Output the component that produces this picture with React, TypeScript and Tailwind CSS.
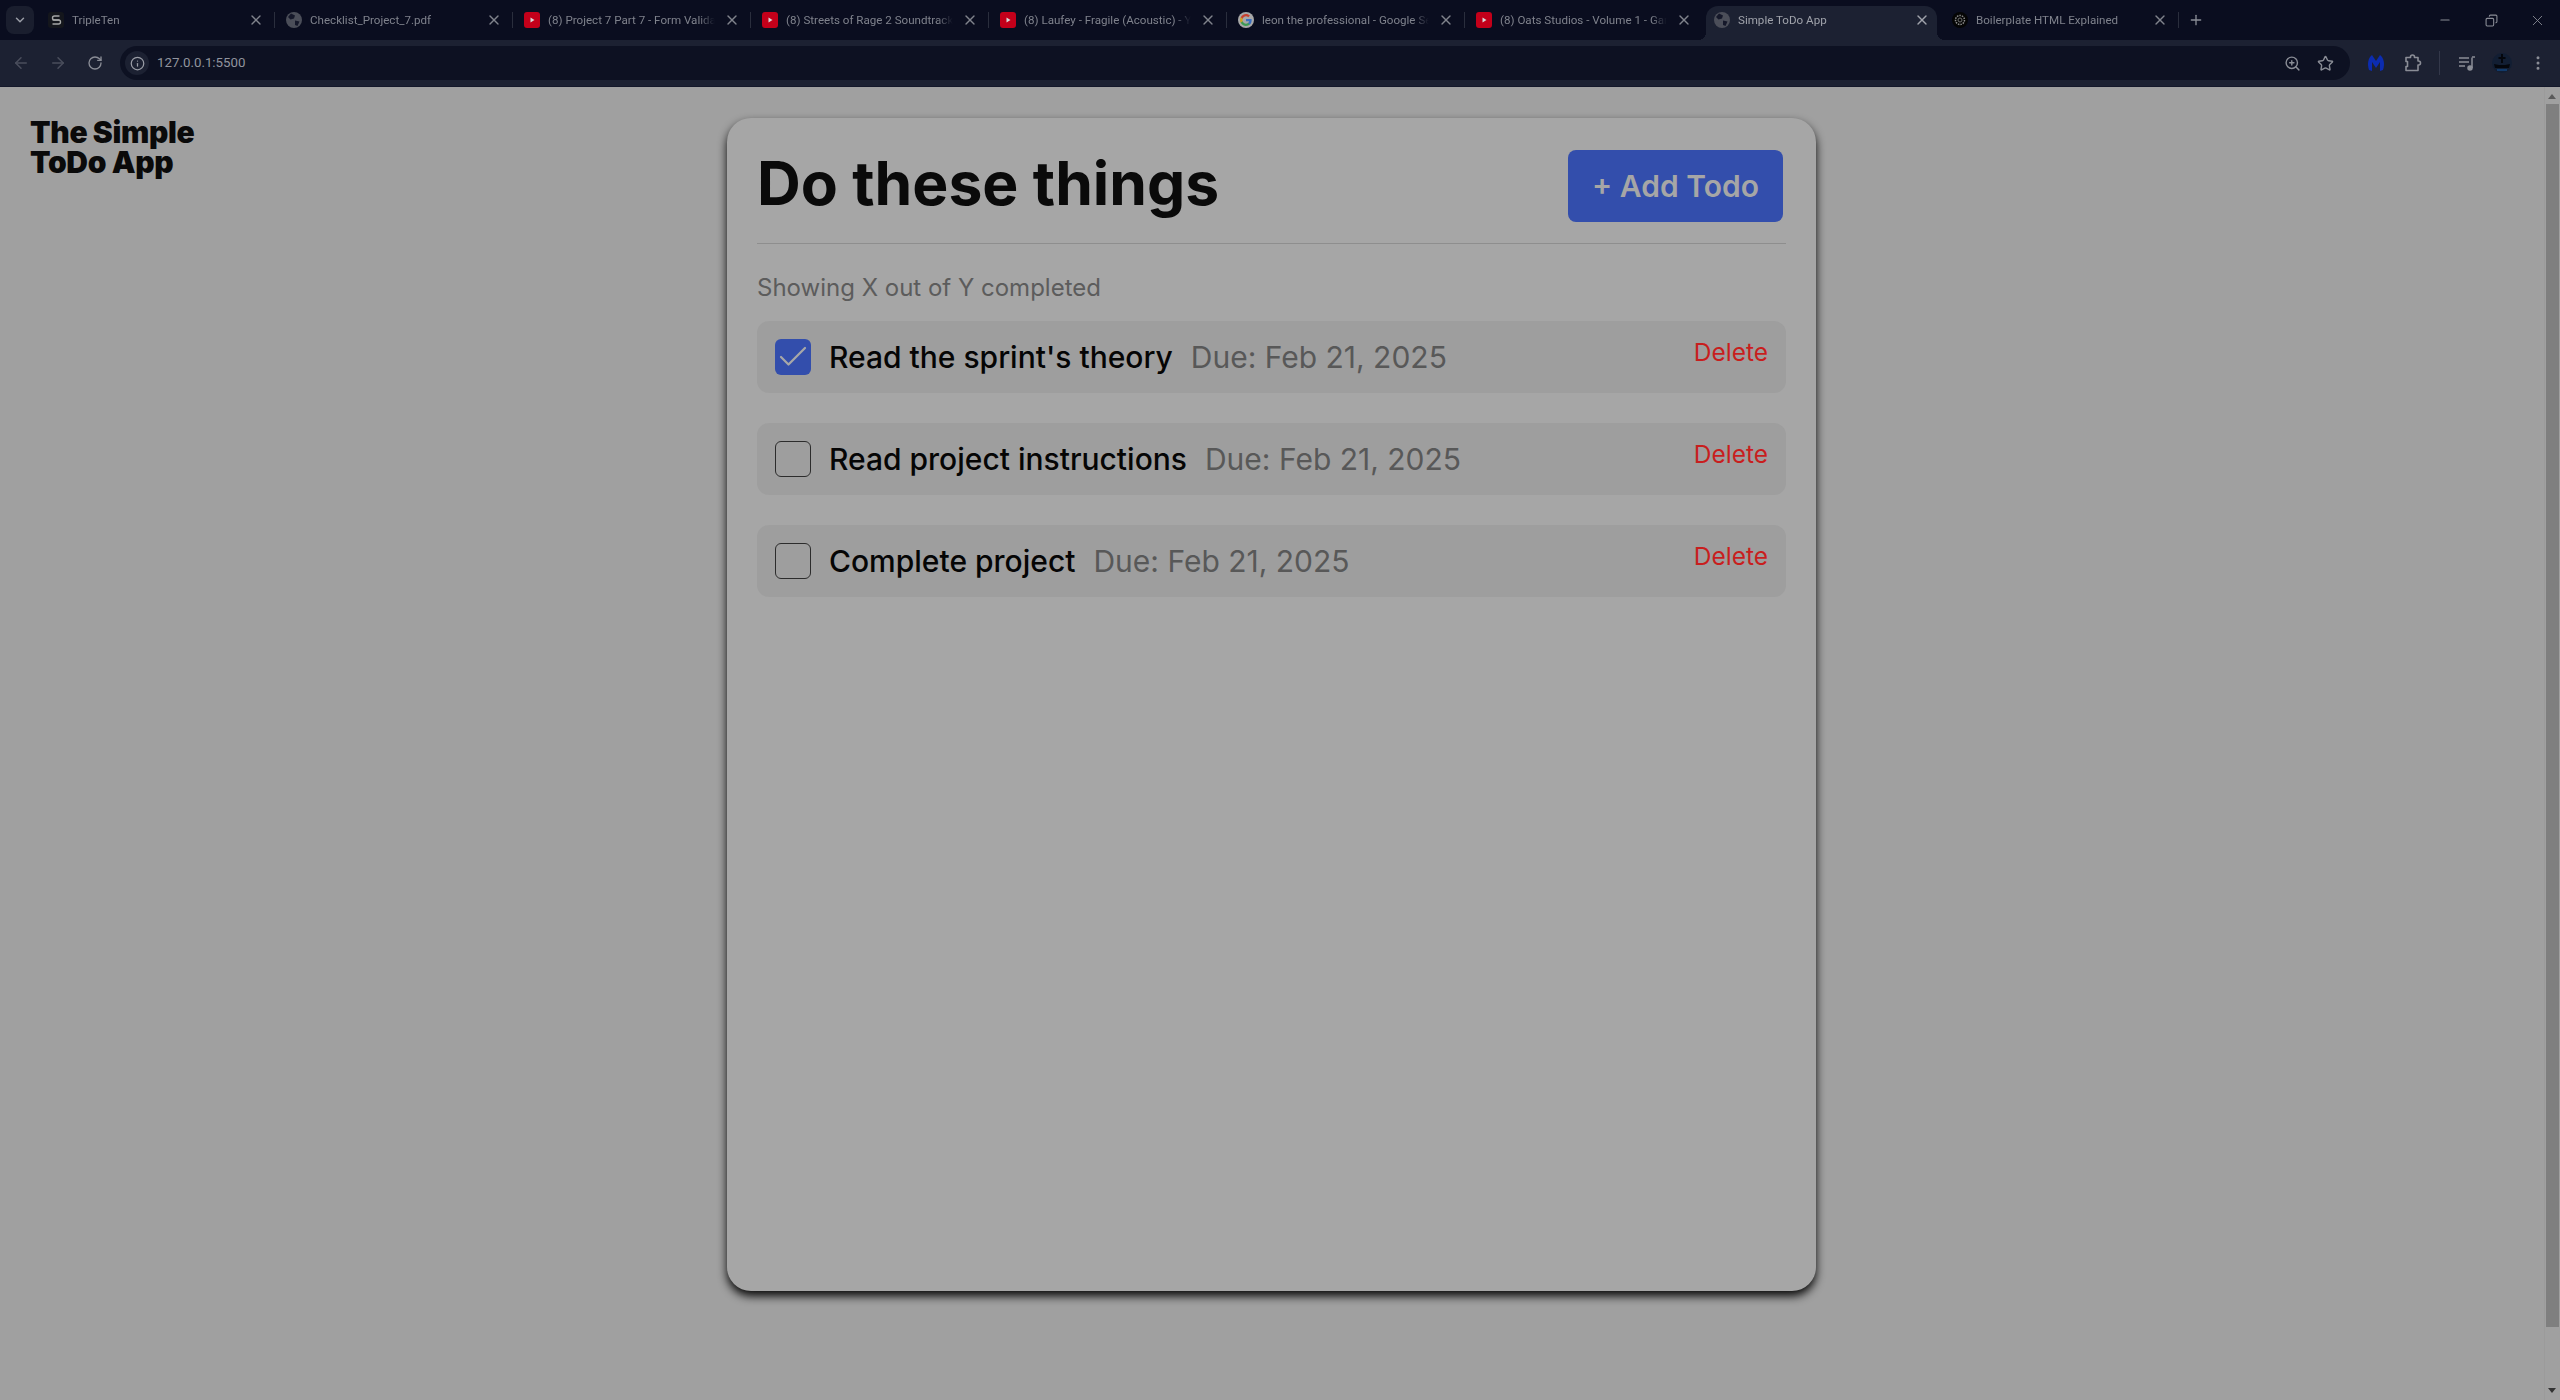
import { ArrowLeft, ArrowRight, Check, ChevronDown, Copy, Info, Minus, MoreVertical, Plus, RotateCw, Star, X, ZoomIn } from 'lucide-react'

type Favicon = 'tripleten' | 'globe' | 'youtube' | 'google' | 'openai'

const tabs: { title: string; icon: Favicon; active?: boolean }[] = [
  { title: 'TripleTen', icon: 'tripleten' },
  { title: 'Checklist_Project_7.pdf', icon: 'globe' },
  { title: '(8) Project 7 Part 7 - Form Validation', icon: 'youtube' },
  { title: '(8) Streets of Rage 2 Soundtrack', icon: 'youtube' },
  { title: '(8) Laufey - Fragile (Acoustic) - YouTube', icon: 'youtube' },
  { title: 'leon the professional - Google Search', icon: 'google' },
  { title: '(8) Oats Studios - Volume 1 - Garage', icon: 'youtube' },
  { title: 'Simple ToDo App', icon: 'globe', active: true },
  { title: 'Boilerplate HTML Explained', icon: 'openai' },
]

const todos = [
  { title: "Read the sprint's theory", due: 'Due: Feb 21, 2025', done: true },
  { title: 'Read project instructions', due: 'Due: Feb 21, 2025', done: false },
  { title: 'Complete project', due: 'Due: Feb 21, 2025', done: false },
]

function TabIcon({ icon }: { icon: Favicon }) {
  if (icon === 'youtube') {
    return (
      <svg width="16" height="16" viewBox="0 0 16 16" className="shrink-0">
        <rect x="0" y="0" width="16" height="16" rx="3" fill="#c4001a" />
        <path d="M6.500 5.500v5l4-2.500z" fill="#d8d8d8" />
      </svg>
    )
  }
  if (icon === 'google') {
    return (
      <svg width="16" height="16" viewBox="0 0 48 48" className="shrink-0">
        <circle cx="24" cy="24" r="24" fill="#a8a8a8" />
        <path d="M41 24.500c0-1.300-.1-2.500-.3-3.500H24v6.800h9.600c-.4 2.200-1.700 4.100-3.500 5.300v4.400h5.700C39 34.400 41 29.900 41 24.500z" fill="#3a6fc0" />
        <path d="M24 42c4.700 0 8.700-1.600 11.700-4.300L30 33.300c-1.600 1.100-3.600 1.700-6 1.700-4.600 0-8.500-3.100-9.900-7.300H8.200v4.500C11.100 38 17.100 42 24 42z" fill="#3d9a52" />
        <path d="M14.100 27.700c-.4-1.100-.6-2.300-.6-3.700s.2-2.500.6-3.700v-4.500H8.200C7.100 18.200 6 21 6 24s1.100 5.800 2.200 8.200z" fill="#d0a020" />
        <path d="M24 13c2.600 0 4.900.9 6.800 2.700l5-5C32.700 7.800 28.700 6 24 6 17.100 6 11.100 10 8.200 15.800l5.900 4.500C15.500 16.100 19.400 13 24 13z" fill="#c7402f" />
      </svg>
    )
  }
  if (icon === 'openai') {
    return (
      <svg width="16" height="16" viewBox="0 0 16 16" fill="none" className="shrink-0">
        <circle cx="8" cy="8" r="8" fill="#050505" />
        <circle cx="8" cy="8" r="4.500" stroke="#8b8b8b" strokeWidth="1.500" strokeDasharray="1.500 1" />
        <circle cx="8" cy="8" r="2" stroke="#6f6f6f" strokeWidth="1" />
      </svg>
    )
  }
  if (icon === 'tripleten') {
    return (
      <svg width="16" height="16" viewBox="0 0 16 16" fill="none" className="shrink-0">
        <rect width="16" height="16" rx="3" fill="#14161c" />
        <path d="M11.500 4H6.500a2 2 0 0 0 0 4h4a2 2 0 0 1 0 4h-6" stroke="#a5a6a6" strokeWidth="1.400" />
        <path d="M4.500 8h7" stroke="#a5a6a6" strokeWidth="1.400" />
      </svg>
    )
  }
  return (
    <svg width="16" height="16" viewBox="0 0 16 16" className="shrink-0">
      <circle cx="8" cy="8" r="8" fill="#4b4e59" />
      <path d="M5 1.500l4 2-1 3-3.500 1L2 5zM9 8.500l4.500 1-2 4.500-2.500-1z" fill="#15182a" />
    </svg>
  )
}

function BrowserTab({ title, icon, active }: { title: string; icon: Favicon; active?: boolean }) {
  return (
    <div className="relative flex h-[34px] w-[238px] shrink-0">
      <div className={`relative flex flex-1 items-center pb-[6px] ${active ? 'ml-[3px] mr-[4px] pl-[8px] rounded-t-[12px] bg-[#1c2132]' : 'pl-[11px]'}`}>
        <TabIcon icon={icon} />
        <span className={`ml-[8px] pt-[2px] w-[172px] overflow-hidden whitespace-nowrap text-[11.600px] mask-[linear-gradient(to_right,black_88%,transparent_97%)] ${active ? 'text-[#a0a3ab]' : 'text-[#7f828c]'}`}>
          {title}
        </span>
        <X size={16} strokeWidth={2} className={`ml-[4px] shrink-0 ${active ? 'text-[#a0a3ab]' : 'text-[#80838c]'}`} />
        {active && (
          <>
            <div className="absolute -left-[8px] bottom-0 h-[8px] w-[8px] bg-[radial-gradient(circle_at_0_0,transparent_8px,#1c2132_8px)]" />
            <div className="absolute -right-[8px] bottom-0 h-[8px] w-[8px] bg-[radial-gradient(circle_at_100%_0,transparent_8px,#1c2132_8px)]" />
          </>
        )}
      </div>
      {!active && title !== '(8) Oats Studios - Volume 1 - Garage' && (
        <div className="absolute right-0 top-[6px] h-[16px] w-px bg-[#2a2e3d]" />
      )}
    </div>
  )
}

function BrowserChrome() {
  return (
    <div className="shrink-0 font-['Roboto','Liberation_Sans',sans-serif]">
      {/* Tab strip */}
      <div className="flex items-end h-[40px] bg-[#0a0d1f] pl-[6px]">
        <div className="flex items-center justify-center w-[28px] h-[28px] mb-[6px] mr-[3px] rounded-[8px] bg-[#1a1e2e] text-[#9a9da6]">
          <ChevronDown size={14} strokeWidth={2.500} />
        </div>
        {tabs.map((tab) => (
          <BrowserTab key={tab.title} {...tab} />
        ))}
        <div className="flex items-center h-[34px] pb-[6px] ml-[9px] text-[#8a8d96]">
          <Plus size={16} />
        </div>
        <div className="flex items-center h-[40px] ml-auto text-[#8a8d96]">
          <div className="w-[46px] flex justify-center"><Minus size={14} /></div>
          <div className="w-[46px] flex justify-center"><Copy size={13} className="-scale-x-100" /></div>
          <div className="w-[46px] flex justify-center"><X size={17} strokeWidth={1.250} /></div>
        </div>
      </div>

      {/* Toolbar */}
      <div className="flex items-center h-[47px] bg-[#1c2132] border-b border-[#14182a] pl-[12px] text-[#8a8d96]">
        <ArrowLeft size={18} className="text-[#4a4e5c]" />
        <ArrowRight size={18} className="ml-[19px] text-[#4a4e5c]" />
        <RotateCw size={16} className="ml-[20px]" />
        <div className="flex items-center flex-1 h-[34px] ml-[17px] pl-[5px] pr-[16px] rounded-full bg-[#0d1122]">
          <div className="flex items-center justify-center w-[24px] h-[24px] rounded-full bg-[#1c2132]">
            <Info size={15} className="text-[#9a9da6]" />
          </div>
          <span className="ml-[8px] text-[13.300px] text-[#91949e]">127.0.0.1:5500</span>
          <ZoomIn size={17} className="ml-auto" />
          <Star size={17} className="ml-[16px]" />
        </div>
        <div className="flex items-center pl-[17px] pr-[13px]">
          <svg width="18" height="20" viewBox="0 0 18 20" className="shrink-0">
            <path d="M2 17C0 11 1 5 5 2l4 6 4-6c4 3 5 9 3 15l-3 1V9l-4 6-4-6v9z" fill="#0c2cb0" />
          </svg>
          <svg width="20" height="20" viewBox="0 0 20 20" fill="none" stroke="currentColor" strokeWidth="1.600" className="ml-[18px] shrink-0">
            <path d="M3 4.500h4.500V4a2 2 0 0 1 4 0v.5H15V8h.5a2 2 0 0 1 0 4H15v5.500H3v-4h1.500V8.500H3z" strokeLinejoin="round" />
          </svg>
          <div className="ml-[16px] w-px h-[24px] bg-[#33384a]" />
          <svg width="18" height="18" viewBox="0 0 18 18" fill="none" stroke="currentColor" strokeWidth="1.500" className="ml-[18px] shrink-0">
            <path d="M1 4h10M1 8h10M1 12h6M14 3.500V14" />
            <path d="M14 3h3" />
            <circle cx="12" cy="14" r="2" fill="currentColor" />
          </svg>
          <svg width="20" height="20" viewBox="0 0 20 20" className="ml-[16px] shrink-0">
            <circle cx="10" cy="10" r="10" fill="#121e33" />
            <path d="M9 1h2v3h2.500v2H11v4H9V6H6.500V4H9zM2 11l5 1h6l5-1-1 4H3z" fill="#05070d" />
            <path d="M5 16h10v2H5z" fill="#123a6a" />
          </svg>
          <MoreVertical size={18} className="ml-[17px]" />
        </div>
      </div>
    </div>
  )
}

function TodoRow({ title, due, done }: { title: string; due: string; done: boolean }) {
  return (
    <div className="flex items-center justify-between h-[72px] rounded-[12px] bg-[#9e9e9e] pl-[18px] pr-[18px]">
      <div className="flex items-center">
        <div className={`flex items-center justify-center w-[36px] h-[36px] rounded-[6px] ${done ? 'bg-[#334eac]' : 'border border-[#2c2c2c]'}`}>
          {done && <Check size={36} strokeWidth={1.500} className="text-[#a8a8a8]" />}
        </div>
        <span className="ml-[18px] text-[30px] font-medium text-[#050505]">{title}</span>
        <span className="ml-[18px] text-[30px] text-[#585858]">{due}</span>
      </div>
      <span className="mb-[9px] text-[24.500px] text-[#c81e1e]">Delete</span>
    </div>
  )
}

export default function App() {
  return (
    <div className="flex flex-col h-screen overflow-hidden bg-[#a0a0a0] font-['Inter',sans-serif]">
      <BrowserChrome />
      <div className="flex flex-1 min-h-0">
        <div className="w-[727px] shrink-0 pl-[30px] pt-[30px]">
          <h2 className="text-[30px] leading-[30px] font-black tracking-[-0.35px] text-[#0a0a0a]">
            The Simple<br />ToDo App
          </h2>
        </div>

        <main className="w-[1089px] h-[1173px] shrink-0 mt-[31px] rounded-[24px] bg-[#a6a6a6] pl-[30px] pr-[30px] shadow-[0_5px_10px_rgba(0,0,0,0.95)]">
          <div className="flex items-center justify-between h-[126px] border-b border-[#8e8e8e] pt-[10px]">
            <h1 className="mb-[4px] text-[60.600px] font-bold text-[#0a0a0a]">Do these things</h1>
            <button className="flex items-center justify-center w-[215px] h-[72px] mr-[3px] rounded-[8px] bg-[#334eac] pt-[1px] text-[30px] font-semibold text-[#a6a6a6]">
              + Add Todo
            </button>
          </div>
          <p className="mt-[29px] text-[24px] leading-[29px] text-[#5c5c5c]">Showing X out of Y completed</p>
          <div className="flex flex-col gap-[30px] mt-[19px]">
            {todos.map((todo) => (
              <TodoRow key={todo.title} {...todo} />
            ))}
          </div>
        </main>

        <div className="flex-1" />

        {/* Scrollbar */}
        <div className="relative w-[16px] shrink-0 border-l border-[#9b9b9b]">
          <svg width="8" height="5" viewBox="0 0 8 5" className="absolute left-[3px] top-[7px]"><path d="M4 0l4 5H0z" fill="#5a5a5a" /></svg>
          <div className="absolute left-[1px] top-[17px] bottom-[73px] w-[13px] bg-[#7f7f7f]" />
          <svg width="8" height="5" viewBox="0 0 8 5" className="absolute left-[3px] bottom-[7px]"><path d="M4 5l4-5H0z" fill="#333" /></svg>
        </div>
      </div>
    </div>
  )
}
